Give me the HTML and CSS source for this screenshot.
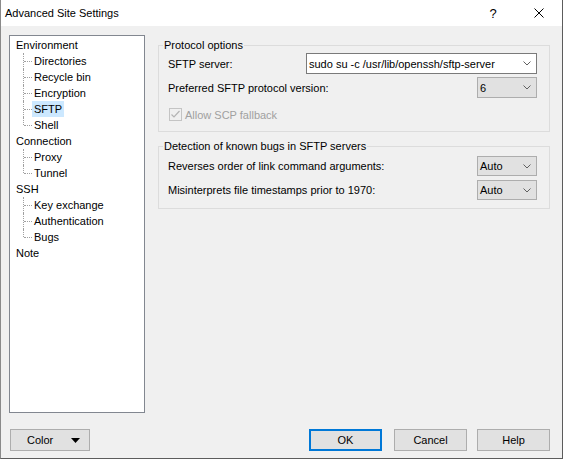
FILE: index.html
```html
<!DOCTYPE html>
<html>
<head>
<meta charset="utf-8">
<link rel="stylesheet" href="styles.css">
</head>
<body>
<div class="window">
  <div class="titlebar">
    <span class="title">Advanced Site Settings</span>
    <span class="cap help">?</span>
    <span class="cap close"><svg width="10" height="10" viewBox="0 0 10 10"><path d="M0.5 0.5 L9.5 9.5 M9.5 0.5 L0.5 9.5" stroke="#000" stroke-width="1" fill="none"/></svg></span>
  </div>
  <div class="content">
    <div class="main">
      <div class="tree">
        <ul class="roots">
          <li><span class="lbl">Environment</span>
            <ul class="kids">
              <li><span class="lbl">Directories</span></li>
              <li><span class="lbl">Recycle bin</span></li>
              <li><span class="lbl">Encryption</span></li>
              <li><span class="lbl sel">SFTP</span></li>
              <li><span class="lbl">Shell</span></li>
            </ul>
          </li>
          <li><span class="lbl">Connection</span>
            <ul class="kids">
              <li><span class="lbl">Proxy</span></li>
              <li><span class="lbl">Tunnel</span></li>
            </ul>
          </li>
          <li><span class="lbl">SSH</span>
            <ul class="kids">
              <li><span class="lbl">Key exchange</span></li>
              <li><span class="lbl">Authentication</span></li>
              <li><span class="lbl">Bugs</span></li>
            </ul>
          </li>
          <li><span class="lbl">Note</span></li>
        </ul>
      </div>
      <div class="panel">
        <fieldset class="group g1">
          <legend>Protocol options</legend>
          <div class="row">
            <span>SFTP server:</span>
            <div class="combo edit wide"><span class="val">sudo su -c /usr/lib/openssh/sftp-server</span><svg class="chev" width="8" height="5" viewBox="0 0 8 5"><path d="M0.5 0.5 L4 4 L7.5 0.5" stroke="#606060" fill="none"/></svg></div>
          </div>
          <div class="row r2">
            <span>Preferred SFTP protocol version:</span>
            <div class="combo small"><span class="val">6</span><svg class="chev" width="8" height="5" viewBox="0 0 8 5"><path d="M0.5 0.5 L4 4 L7.5 0.5" stroke="#606060" fill="none"/></svg></div>
          </div>
          <div class="check">
            <span class="box"><svg width="11" height="11" viewBox="0 0 11 11"><path d="M1.5 5.5 L4 8 L9.5 2" stroke="#b4b4b4" stroke-width="1.2" fill="none"/></svg></span>
            <span>Allow SCP fallback</span>
          </div>
        </fieldset>
        <fieldset class="group g2">
          <legend>Detection of known bugs in SFTP servers</legend>
          <div class="row r3">
            <span>Reverses order of link command arguments:</span>
            <div class="combo small"><span class="val">Auto</span><svg class="chev" width="8" height="5" viewBox="0 0 8 5"><path d="M0.5 0.5 L4 4 L7.5 0.5" stroke="#606060" fill="none"/></svg></div>
          </div>
          <div class="row r4">
            <span>Misinterprets file timestamps prior to 1970:</span>
            <div class="combo small"><span class="val">Auto</span><svg class="chev" width="8" height="5" viewBox="0 0 8 5"><path d="M0.5 0.5 L4 4 L7.5 0.5" stroke="#606060" fill="none"/></svg></div>
          </div>
        </fieldset>
      </div>
    </div>
    <div class="buttons">
      <div class="btn color"><span>Color</span><svg class="arrow" width="9" height="5" viewBox="0 0 9 5"><path d="M0 0 H9 L4.5 5 Z" fill="#000"/></svg></div>
      <div class="spacer"></div>
      <div class="btn default">OK</div>
      <div class="btn cancel">Cancel</div>
      <div class="btn helpbtn">Help</div>
    </div>
  </div>
</div>
</body>
</html>
```
FILE: styles.css
```css
html, body {
  margin: 0;
  padding: 0;
  background: #fff;
}
body {
  font-family: "Liberation Sans", Arial, sans-serif;
  font-size: 11px;
  color: #000;
}
.window {
  width: 563px;
  height: 459px;
  box-sizing: border-box;
  border-left: 1px solid #8a8a8a;
  border-right: 1px solid #5c5c5c;
  border-bottom: 1px solid #5c5c5c;
  display: flex;
  flex-direction: column;
  background: #f0f0f0;
}
.titlebar {
  height: 26px;
  flex: none;
  background: #fff;
  display: flex;
  align-items: center;
  padding-left: 4px;
}
.title {
  flex: 1;
  font-size: 11px;
}
.cap {
  width: 46px;
  height: 26px;
  display: flex;
  align-items: center;
  justify-content: center;
}
.help {
  font-size: 13px;
}
.content {
  flex: 1;
  padding: 9px 12px 7px 8px;
  display: flex;
  flex-direction: column;
}
.main {
  display: flex;
  height: 378px;
}
.tree {
  width: 136px;
  box-sizing: border-box;
  border: 1px solid #828790;
  background: #fff;
  padding: 1px 0 0 6px;
}
.tree ul {
  list-style: none;
  margin: 0;
  padding: 0;
}
.tree li {
  line-height: 16px;
}
.kids {
  margin-left: 7px !important;
}
.kids li {
  position: relative;
  padding-left: 9px;
}
.kids li::before {
  content: "";
  position: absolute;
  left: 0;
  top: 0;
  bottom: 0;
  border-left: 1px dotted #a0a0a0;
}
.kids li:last-child::before {
  bottom: auto;
  height: 8px;
}
.kids li::after {
  content: "";
  position: absolute;
  left: 1px;
  top: 8px;
  width: 8px;
  border-top: 1px dotted #a0a0a0;
}
.kids .lbl {
  display: inline-block;
  padding: 0 2px;
}
.sel {
  background: #cce8ff;
}
.panel {
  margin-left: 13px;
  width: 392px;
}
.group {
  margin: 3px 0 0 0;
  border: 1px solid #dcdcdc;
  padding: 1px 12px 10px 9px;
  min-width: 0;
}
.group legend {
  line-height: 14px;
  padding: 0 1px;
  margin-left: -5px;
}
.g2 {
  margin-top: 7px;
  padding-top: 3px;
  padding-bottom: 8px;
}
.row {
  display: flex;
  align-items: center;
  justify-content: space-between;
}
.r2 {
  margin-top: 3px;
}
.r4 {
  margin-top: 4px;
}
.combo {
  box-sizing: border-box;
  display: flex;
  align-items: center;
  height: 20px;
  background: #e1e1e1;
  border: 1px solid #adadad;
  padding-left: 2px;
}
.combo .val {
  flex: 1;
  white-space: nowrap;
}
.combo .chev {
  margin-right: 5px;
}
.edit {
  background: #fff;
  border-color: #7a7a7a;
  height: 21px;
}
.wide {
  width: 231px;
}
.small {
  width: 60px;
}
.r2 .small {
  height: 21px;
}
.check {
  display: flex;
  align-items: center;
  margin-top: 10px;
  margin-left: 1px;
  color: #a0a0a0;
  height: 13px;
}
.box {
  box-sizing: border-box;
  width: 13px;
  height: 13px;
  border: 1px solid #c4c4c4;
  background: #f0f0f0;
  margin-right: 3px;
  display: flex;
  align-items: center;
  justify-content: center;
}
.buttons {
  margin-top: 16px;
  display: flex;
  height: 22px;
}
.btn {
  box-sizing: border-box;
  height: 22px;
  width: 73px;
  background: #e1e1e1;
  border: 1px solid #adadad;
  display: flex;
  align-items: center;
  justify-content: center;
}
.color {
  width: 80px;
  margin-left: 1px;
  justify-content: flex-start;
  padding-left: 16px;
}
.color .arrow {
  margin-left: auto;
  margin-right: 9px;
}
.spacer {
  flex: 1;
}
.default {
  border: 2px solid #0078d7;
}
.cancel {
  margin-left: 12px;
}
.helpbtn {
  margin-left: 10px;
}
```
